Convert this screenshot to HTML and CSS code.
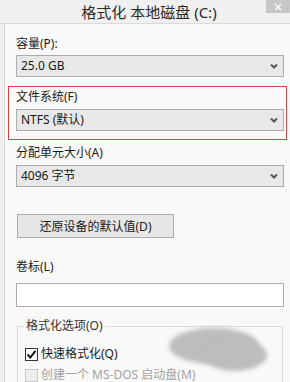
FILE: index.html
```html
<!DOCTYPE html>
<html lang="zh-CN">
<head>
    <meta charset="UTF-8">
    <title>格式化 本地磁盘 (C:)</title>
    <link rel="stylesheet" href="styles.css">
</head>
<body>
    <div class="titlebar">
        <span class="title">格式化 本地磁盘 (C:)</span>
        <span class="close"><svg width="8" height="8" viewBox="0 0 8 8"><path d="M1 1 L7 7 M7 1 L1 7" stroke="#fff" stroke-width="1.4"/></svg></span>
    </div>

    <div class="window">
        <div class="label">容量(P):</div>
        <div class="combo">25.0 GB <svg class="chevron" width="8" height="6" viewBox="0 0 8 6"><path d="M1 1.5 L4 4.5 L7 1.5" fill="none" stroke="#555" stroke-width="2"/></svg></div>

        <div class="highlight">
            <div class="label">文件系统(F)</div>
            <div class="combo">NTFS (默认) <svg class="chevron" width="8" height="6" viewBox="0 0 8 6"><path d="M1 1.5 L4 4.5 L7 1.5" fill="none" stroke="#555" stroke-width="2"/></svg></div>
        </div>

        <div class="label label-gap">分配单元大小(A)</div>
        <div class="combo">4096 字节 <svg class="chevron" width="8" height="6" viewBox="0 0 8 6"><path d="M1 1.5 L4 4.5 L7 1.5" fill="none" stroke="#555" stroke-width="2"/></svg></div>

        <button class="btn">还原设备的默认值(D)</button>

        <div class="label label-volume">卷标(L)</div>
        <input class="textbox" type="text">

        <fieldset class="group">
            <legend>格式化选项(O)</legend>
            <div class="check-row">
                <span class="checkbox checked"><svg width="11" height="11" viewBox="0 0 11 11"><path d="M1.5 5.5 L4.3 8.5 L9.5 1.8" fill="none" stroke="#111" stroke-width="2"/></svg></span>
                快速格式化(Q)
            </div>
            <div class="check-row disabled">
                <span class="checkbox"></span>
                创建一个 MS-DOS 启动盘(M)
            </div>
        </fieldset>
    </div>

    <div class="smudge smudge-a"></div>
    <div class="smudge smudge-b"></div>
</body>
</html>
```

FILE: styles.css
```css
body {
    margin: 0;
    width: 290px;
    height: 382px;
    overflow: hidden;
    background-color: #f0f0f0;
    font-family: "Noto Sans", "Noto Sans CJK SC", sans-serif;
    font-size: 12px;
    color: #1a1a1a;
    position: relative;
}

.titlebar {
    height: 23px;
    border-bottom: 1px solid #dadada;
    display: flex;
    align-items: center;
    justify-content: center;
    padding-left: 4px;
}

.title {
    font-size: 15px;
    line-height: 20px;
    color: #2b2b2b;
    margin-left: 4px;
}

.close {
    position: absolute;
    top: 0;
    right: 0;
    width: 24px;
    height: 13px;
    background-color: #c7c7c7;
    display: flex;
    align-items: center;
    justify-content: center;
}

.window {
    margin-left: 4px;
    border-left: 1px solid #d6d6d6;
    background-color: #f9f9f9;
    padding: 12px 6px 0 11px;
    height: 346px;
    overflow: hidden;
}

.label {
    line-height: 16px;
    height: 16px;
    margin-bottom: 4px;
}

.window > .label:first-child {
    margin-bottom: 3px;
}

.combo {
    height: 20px;
    border: 1px solid #acacac;
    background-color: #e8e8e8;
    display: flex;
    align-items: center;
    justify-content: space-between;
    padding: 0 5px 0 4px;
    line-height: 20px;
}

.highlight {
    margin: 9px -3px 0 -8px;
    padding: 2px 2px 8px 7px;
    border: 1px solid #d2464c;
}

.label-gap {
    margin-top: 5px;
}

.btn {
    display: block;
    margin: 27px 0 0 1px;
    width: 157px;
    height: 24px;
    border: 1px solid #acacac;
    background-color: #e6e6e6;
    font-family: "Noto Sans", "Noto Sans CJK SC", sans-serif;
    font-size: 12px;
    color: #1a1a1a;
    padding: 0;
}

.label-volume {
    margin-top: 21px;
    margin-bottom: 8px;
}

.textbox {
    display: block;
    box-sizing: border-box;
    width: 100%;
    height: 24px;
    margin: 0;
    border: 1px solid #acacac;
    background-color: #fff;
}

.group {
    margin: 11px 1px 0 1px;
    padding: 12px 7px 0 7px;
    border: 1px solid #dcdcdc;
    height: 80px;
}

.group legend {
    padding: 0 2px;
    margin-left: -1px;
    line-height: 16px;
    color: #333;
}

.check-row {
    display: flex;
    align-items: center;
    gap: 3px;
    height: 16px;
    line-height: 16px;
    margin-bottom: 5px;
}

.checkbox {
    box-sizing: border-box;
    width: 13px;
    height: 13px;
    border: 1px solid #333;
    background-color: #fff;
    display: flex;
    align-items: center;
    justify-content: center;
}

.disabled {
    color: #a3a3a3;
}

.disabled .checkbox {
    border-color: #c9c9c9;
    background-color: #ececec;
}

.smudge {
    position: absolute;
    background-color: #bdbdbd;
    border-radius: 50%;
    filter: blur(2px);
}

.smudge-a {
    left: 169px;
    top: 328px;
    width: 90px;
    height: 36px;
}

.smudge-b {
    left: 203px;
    top: 339px;
    width: 64px;
    height: 32px;
}
```
